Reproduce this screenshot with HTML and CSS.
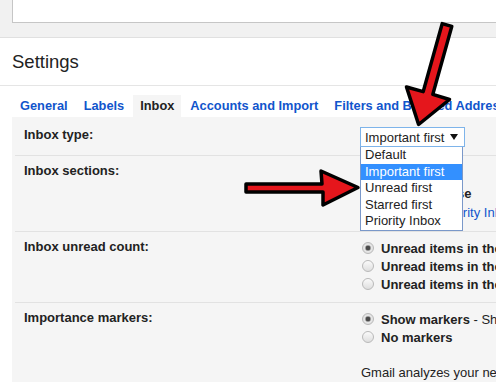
FILE: index.html
```html
<!DOCTYPE html>
<html lang="en">
<head>
    <meta charset="UTF-8">
    <meta name="viewport" content="width=device-width, initial-scale=1.0">
    <title>Settings</title>
    <link rel="stylesheet" href="styles.css">
</head>
<body>

<!-- Barra de busca no topo -->
<div class="topbar">
    <div class="searchbox"></div>
</div>

<h1 class="title">Settings</h1>

<!-- Abas -->
<div class="tabs">
    <a class="tab">General</a>
    <a class="tab">Labels</a>
    <a class="tab active">Inbox</a>
    <a class="tab">Accounts and Import</a>
    <a class="tab">Filters and Blocked Addresses</a>
</div>

<div class="panel">
    <div class="row first">
        <div class="label">Inbox type:</div>
        <div class="value">
            <div class="select">
                <span>Important first</span>
                <svg class="caret" width="8" height="6" viewBox="0 0 8 6"><polygon points="0,0 8,0 4,6"/></svg>
            </div>
        </div>
    </div>

    <div class="row">
        <div class="label">Inbox sections:</div>
        <div class="value sections">
            <div><b>1. Important</b></div>
            <div><b>2. Everything else</b></div>
            <div>Customize in <a class="link">Priority Inbox</a></div>
        </div>
    </div>

    <div class="row">
        <div class="label">Inbox unread count:</div>
        <div class="value">
            <label class="radio"><input type="radio" name="count" checked><span><b>Unread items in the first section</b></span></label>
            <label class="radio"><input type="radio" name="count"><span><b>Unread items in the whole inbox</b></span></label>
            <label class="radio"><input type="radio" name="count"><span><b>Unread items in the first section only</b></span></label>
        </div>
    </div>

    <div class="row">
        <div class="label">Importance markers:</div>
        <div class="value">
            <label class="radio"><input type="radio" name="markers" checked><span><b>Show markers</b> - Show a marker by messages marked as important.</span></label>
            <label class="radio"><input type="radio" name="markers"><span><b>No markers</b></span></label>
            <p class="note">Gmail analyzes your new incoming mail to predict what's important,<br>and many other factors.</p>
        </div>
    </div>
</div>

<!-- Lista aberta do select -->
<ul class="dropdown">
    <li>Default</li>
    <li class="selected">Important first</li>
    <li>Unread first</li>
    <li>Starred first</li>
    <li>Priority Inbox</li>
</ul>

<!-- Setas vermelhas por cima -->
<svg class="arrows" width="496" height="382" viewBox="0 0 496 382">
    <polygon points="451.8,26.4 432.8,94.4 449.5,99.5 418.6,124.5 406.5,87 423.2,91.6 442.2,23.6"/>
    <polygon points="246,184 322,184 321,171 358,187.5 323,205 323,192 246,192"/>
</svg>

</body>
</html>
```

FILE: styles.css
```css
html, body {
    margin: 0;
    overflow: hidden;
}

body {
    font-family: "Liberation Sans", Arial, sans-serif;
    font-size: 13px;
    color: #222;
    background: #fff;
    width: 496px;
    height: 382px;
    position: relative;
}

.topbar {
    height: 37px;
    background: #f1f1f1;
    border-bottom: 1px solid #e0e0e0;
    padding-left: 12px;
}

.searchbox {
    height: 22px;
    background: #fff;
    border-left: 1px solid #c6c6c6;
    border-bottom: 1px solid #c6c6c6;
}

.title {
    margin: 0;
    height: 47px;
    line-height: 47px;
    padding-left: 12px;
    font-size: 18.5px;
    font-weight: normal;
    border-bottom: 1px solid #e5e5e5;
}

.tabs {
    display: flex;
    padding: 9px 0 0 13px;
    white-space: nowrap;
}

.tab {
    padding: 0 7px;
    margin-right: 2px;
    line-height: 22px;
    font-weight: bold;
    font-size: 12.8px;
    color: #15c;
}

.tab.active {
    color: #222;
    background: #f5f5f5;
}

.panel {
    margin-left: 12px;
    background: #f5f5f5;
    white-space: nowrap;
}

.row {
    display: flex;
    margin-left: 3px;
    padding: 7px 0 9px;
    border-bottom: 1px solid #e2e2e2;
}

.row.first {
    padding: 10px 0 8px;
}

.label {
    flex: none;
    width: 337px;
    padding-left: 9px;
    font-weight: bold;
    line-height: 15px;
}

.value {
    flex: 1;
    min-width: 0;
}

.select {
    width: 93px;
    height: 18px;
    border: 1px solid #7eb4ea;
    background: #fff;
    display: flex;
    align-items: center;
    justify-content: space-between;
    padding: 0 6px 0 4px;
    margin-left: -1px;
}

.caret {
    fill: #111;
}

.sections {
    line-height: 19px;
    padding-top: 2px;
}

.link {
    color: #15c;
}

.radio {
    display: flex;
    align-items: center;
    height: 18px;
}

.radio input {
    flex: none;
    appearance: none;
    width: 12px;
    height: 12px;
    margin: 0 7px 0 1px;
    border: 1px solid #b9b9b9;
    border-radius: 50%;
    background: linear-gradient(#fafafa, #dedede);
    box-sizing: border-box;
}

.radio input:checked {
    background: radial-gradient(circle, #4a4a4a 0 2px, #9a9a9a 2.5px, #e6e6e6 3.5px, #dcdcdc);
}

.note {
    margin: 19px 0 0;
    line-height: 15px;
}

.dropdown {
    position: absolute;
    left: 360px;
    top: 147px;
    width: 101px;
    margin: 0;
    padding: 0;
    list-style: none;
    background: #fff;
    border: 1px solid #7a98c9;
    border-top: none;
}

.dropdown li {
    line-height: 16.5px;
    padding-left: 4px;
}

.dropdown .selected {
    background: #3390ff;
    color: #fff;
}

.arrows {
    position: absolute;
    left: 0;
    top: 0;
}

.arrows polygon {
    fill: #e5161c;
    stroke: #000;
    stroke-width: 3.5;
    stroke-linejoin: round;
}
```
